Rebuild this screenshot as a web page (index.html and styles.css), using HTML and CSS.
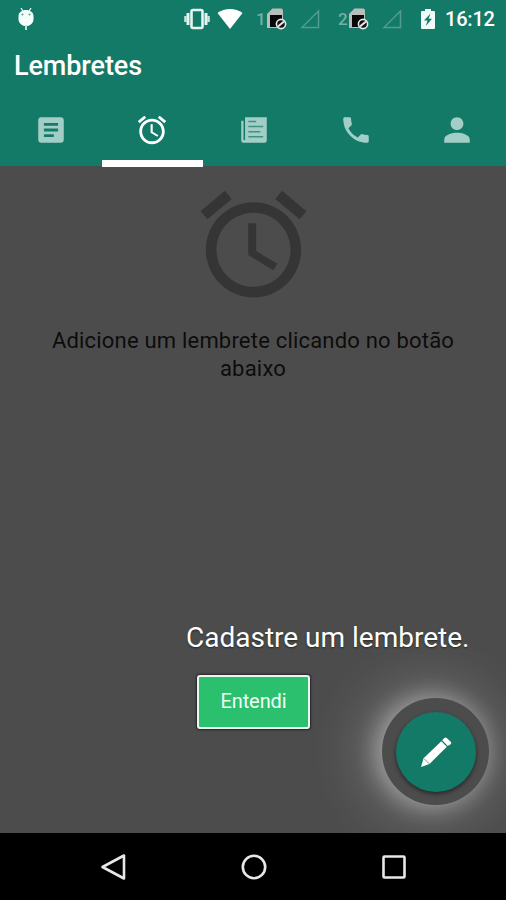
FILE: index.html
```html
<!DOCTYPE html>
<html lang="pt-BR">
<head>
    <meta charset="UTF-8">
    <meta name="viewport" content="width=device-width, initial-scale=1.0">
    <title>Lembretes</title>
    <link rel="stylesheet" href="styles.css">
</head>
<body>
    <header class="app-header">
        <div class="status-bar">
            <svg class="droid" width="18" height="24" viewBox="0 0 18 24">
                <path d="M4 1l2.500 4M14 1l-2.500 4" stroke="#fff" stroke-width="1.200"/>
                <path d="M1.500 9C1.500 5.500 5 3 9 3s7.500 2.500 7.500 6v3c0 4-3 6.500-6 7h-3c-3-.5-6-3-6-7z" fill="#f4fffc"/>
                <path d="M9 18v5" stroke="#c5dfda" stroke-width="2"/>
                <circle cx="5.500" cy="7.500" r="1" fill="#5a9e91"/>
                <circle cx="12.500" cy="7.500" r="1" fill="#5a9e91"/>
            </svg>
            <div class="status-icons">
                <svg class="vibrate" width="28" height="22" viewBox="0 0 28 22">
                    <rect x="8.500" y="2" width="11" height="18" rx="1.500" fill="none" stroke="#e6f5f1" stroke-width="2.600"/>
                    <path d="M5 5v12M23 5v12" stroke="#e6f5f1" stroke-width="3"/>
                    <path d="M2.500 8v6M25.500 8v6" stroke="#c8e3dd" stroke-width="2.600"/>
                </svg>
                <svg class="wifi" width="26" height="22" viewBox="0 0 26 22">
                    <path d="M13 21L.5 5C7.500-.2 18.500-.2 25.500 5z" fill="#fff"/>
                </svg>
                <span class="sim-number">1</span>
                <svg class="sim" width="21" height="24" viewBox="0 0 21 24">
                    <path d="M1 7l5.500-5.500H15q2 0 2 2V21H1z" fill="#b9bdbc"/>
                    <path d="M4 8h12v12H4z" fill="#080808"/>
                    <circle cx="15" cy="17" r="4.600" fill="#111" stroke="#e8e8e8" stroke-width="1.600"/>
                    <path d="M12 19.500l6-5" stroke="#e8e8e8" stroke-width="2"/>
                </svg>
                <svg class="signal" width="20" height="20" viewBox="0 0 20 20">
                    <path d="M2 18.500L18.500 2v16.500z" fill="none" stroke="#519c8e" stroke-width="1.500"/>
                </svg>
                <span class="sim-number second">2</span>
                <svg class="sim" width="21" height="24" viewBox="0 0 21 24">
                    <path d="M1 7l5.500-5.500H15q2 0 2 2V21H1z" fill="#b9bdbc"/>
                    <path d="M4 8h12v12H4z" fill="#080808"/>
                    <circle cx="15" cy="17" r="4.600" fill="#111" stroke="#e8e8e8" stroke-width="1.600"/>
                    <path d="M12 19.500l6-5" stroke="#e8e8e8" stroke-width="2"/>
                </svg>
                <svg class="signal" width="20" height="20" viewBox="0 0 20 20">
                    <path d="M2 18.500L18.500 2v16.500z" fill="none" stroke="#519c8e" stroke-width="1.500"/>
                </svg>
                <svg class="battery" width="14" height="20" viewBox="0 0 14 20">
                    <path d="M4 0h6v2h3q1 0 1 1v16q0 1-1 1H1q-1 0-1-1V3q0-1 1-1h3z" fill="#f1fbf8"/>
                    <path d="M9.500 4.500L3 11.500h3.500L4.800 17 11 9.700H7.600z" fill="#147a68"/>
                </svg>
                <span class="clock">16:12</span>
            </div>
        </div>
        <h1>Lembretes</h1>
        <nav class="tabs">
            <a class="tab">
                <svg viewBox="0 0 24 24"><path d="M19 3H5c-1.100 0-2 .9-2 2v14c0 1.100.9 2 2 2h14c1.100 0 2-.9 2-2V5c0-1.100-.9-2-2-2zm-5 14H7v-2h7v2zm3-4H7v-2h10v2zm0-4H7V7h10v2z"/></svg>
            </a>
            <a class="tab active">
                <svg viewBox="0 0 24 24"><path d="M22 5.720l-4.600-3.860-1.290 1.530 4.600 3.860L22 5.720zM7.880 3.390L6.600 1.860 2 5.710l1.290 1.530 4.590-3.850zM12.500 8H11v6l4.750 2.850.75-1.230-4-2.370V8zM12 4c-4.970 0-9 4.030-9 9s4.020 9 9 9c4.970 0 9-4.030 9-9s-4.030-9-9-9zm0 16c-3.870 0-7-3.130-7-7s3.130-7 7-7 7 3.130 7 7-3.130 7-7 7z"/></svg>
            </a>
            <a class="tab">
                <svg viewBox="0 0 24 24">
                    <path d="M5.700 3H21v16.500q0 1.500-1.500 1.500h-15Q3 21 3 19.500V5.500h1.600V19h1.100z"/>
                    <path class="lines" d="M8 6h5.500M8 9.500h10.500M8 13.200h8.500M8 16.800h10.500"/>
                </svg>
            </a>
            <a class="tab">
                <svg viewBox="0 0 24 24"><path d="M6.620 10.790c1.440 2.830 3.760 5.140 6.590 6.590l2.200-2.200c.27-.27.67-.36 1.020-.24 1.120.37 2.330.57 3.570.57.55 0 1 .45 1 1V20c0 .55-.45 1-1 1-9.390 0-17-7.610-17-17 0-.55.45-1 1-1h3.500c.55 0 1 .45 1 1 0 1.250.2 2.450.57 3.570.11.35.03.74-.25 1.020l-2.200 2.200z"/></svg>
            </a>
            <a class="tab">
                <svg viewBox="0 0 24 24"><path d="M12 12c2.480 0 4.500-2.020 4.500-4.500S14.480 3 12 3 7.500 5.020 7.500 7.500 9.520 12 12 12zm0 2c-3 0-9 1.300-9 4.700V21h18v-2.300C21 15.300 15 14 12 14z"/></svg>
            </a>
        </nav>
    </header>

    <main class="content">
        <svg class="empty-icon" viewBox="0 0 24 24"><path d="M22 5.720l-4.600-3.860-1.290 1.530 4.600 3.860L22 5.720zM7.880 3.390L6.600 1.860 2 5.710l1.290 1.530 4.590-3.850zM12.500 8H11v6l4.750 2.850.75-1.230-4-2.370V8zM12 4c-4.970 0-9 4.030-9 9s4.020 9 9 9c4.970 0 9-4.030 9-9s-4.030-9-9-9zm0 16c-3.870 0-7-3.130-7-7s3.130-7 7-7 7 3.130 7 7-3.130 7-7 7z"/></svg>
        <p class="empty-text">Adicione um lembrete clicando no botão abaixo</p>

        <div class="hint">
            <p class="hint-text">Cadastre um lembrete.</p>
            <button class="hint-button">Entendi</button>
        </div>

        <!-- Botão flutuante com destaque -->
        <div class="spotlight">
            <button class="fab" aria-label="Novo lembrete">
                <svg width="34" height="34" viewBox="0 0 34 34">
                    <path d="M2 32l2.600-8.800L22.300 6.200l5.500 5.500L10.500 29z" fill="#fff"/>
                    <path d="M23.200 5.300l2.200-2.200q1.200-1.200 2.400 0l3.900 3.700q1.200 1.200 0 2.400l-3 1.700z" fill="#fff"/>
                    <path d="M4.800 23.400l5.600 5.600" stroke="#5fa698" stroke-width="1"/>
                </svg>
            </button>
        </div>
    </main>

    <footer class="nav-bar">
        <svg width="30" height="30" viewBox="0 0 30 30"><path d="M3.500 15L25 3.500v23z"/></svg>
        <svg width="30" height="30" viewBox="0 0 30 30"><circle cx="15" cy="15" r="11.200"/></svg>
        <svg width="30" height="30" viewBox="0 0 30 30"><rect x="4.500" y="4.500" width="21" height="21" rx="1"/></svg>
    </footer>
</body>
</html>
```
FILE: styles.css
```css
* {
    box-sizing: border-box;
}
body {
    font-family: Roboto, sans-serif;
    background-color: #000;
    color: #fff;
    margin: 0;
    height: 900px;
    display: flex;
    flex-direction: column;
    overflow: hidden;
}
svg {
    display: block;
    flex: none;
}
.app-header {
    height: 166px;
    background-color: #147a68;
    position: relative;
    z-index: 1;
}
.status-bar {
    height: 37px;
    display: flex;
    justify-content: space-between;
    align-items: center;
    padding: 0 12px 0 17px;
}
.status-icons {
    display: flex;
    align-items: center;
}
.wifi {
    margin-left: 6px;
}
.sim-number {
    width: 10px;
    margin-left: 13px;
    font-size: 17px;
    font-weight: 500;
    line-height: 38px;
    color: #72b1a5;
}
.sim-number.second {
    margin-left: 18px;
}
.signal {
    margin-left: 13px;
}
.battery {
    margin-left: 19px;
}
.clock {
    width: 49px;
    margin-left: 10px;
    font-size: 20px;
    font-weight: 500;
    line-height: 38px;
    letter-spacing: -0.2px;
}
h1 {
    height: 61px;
    margin: 0;
    padding-left: 14px;
    font-size: 27px;
    font-weight: 500;
    line-height: 58px;
    letter-spacing: -0.1px;
}
.tabs {
    display: flex;
    width: 508px;
    height: 69px;
}
.tab {
    flex: 1;
    display: flex;
    justify-content: center;
    padding-top: 15px;
}
.tab svg {
    width: 34px;
    height: 34px;
    fill: #a3cec7;
}
.tab .lines {
    fill: none;
    stroke: #3f9283;
    stroke-width: 1;
}
.tab.active {
    border-bottom: 7px solid #fff;
}
.tab.active svg {
    fill: #fff;
}
.content {
    height: 667px;
    background-color: #4c4c4c;
    position: relative;
    overflow: hidden;
    display: flex;
    flex-direction: column;
    align-items: center;
}
.empty-icon {
    width: 127px;
    height: 127px;
    margin-top: 15px;
    fill: #353535;
}
.empty-text {
    width: 420px;
    margin: 19px 0 0;
    text-align: center;
    font-size: 22px;
    line-height: 28px;
    letter-spacing: 0.2px;
    color: #0c0c0c;
}
.hint {
    width: 284px;
    margin: 238px 36px 0 0;
    align-self: flex-end;
}
.hint-text {
    margin: 0;
    font-size: 28px;
    line-height: 34px;
    white-space: nowrap;
    text-shadow: 0 1px 2px rgba(0,0,0,0.5);
}
.hint-button {
    display: block;
    width: 113px;
    height: 54px;
    margin: 20px 0 0 11px;
    padding: 0 0 2px;
    border: 2px solid #e9f8ee;
    border-radius: 3px;
    background-color: #2bc06d;
    color: #effff5;
    font-family: inherit;
    font-size: 20px;
    letter-spacing: -0.1px;
    box-shadow: 0 0 2px 1px rgba(30,15,30,0.7);
}
/* Fica por cima do conteúdo, no canto inferior direito */
.spotlight {
    position: absolute;
    right: 17px;
    bottom: 28px;
    width: 107px;
    height: 107px;
    border-radius: 50%;
    background-color: #4c4c4c;
    display: flex;
    justify-content: center;
    align-items: center;
    box-shadow: -4px 0 22px 3px rgba(255,255,255,0.36), -6px 0 56px 16px rgba(255,255,255,0.2);
}
.fab {
    width: 80px;
    height: 80px;
    padding: 0;
    border: none;
    border-radius: 50%;
    background-color: #147a68;
    display: flex;
    justify-content: center;
    align-items: center;
    box-shadow: 0 2px 4px rgba(0,0,0,0.5);
}
.nav-bar {
    height: 67px;
    background-color: #000;
    display: flex;
    justify-content: space-between;
    align-items: center;
    padding: 0 97px 0 99px;
}
.nav-bar svg {
    fill: none;
    stroke: #e8e8e8;
    stroke-width: 2.600;
    stroke-linejoin: round;
}
```
